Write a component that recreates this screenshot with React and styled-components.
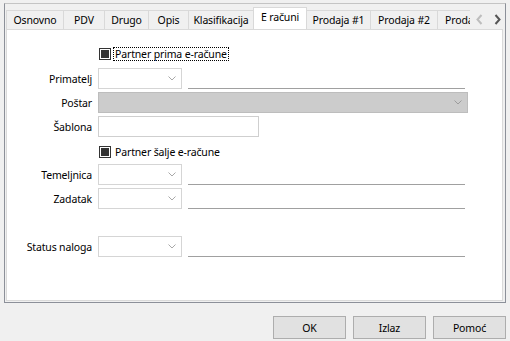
import React from "react";
import styled, { createGlobalStyle } from "styled-components";

const GlobalStyle = createGlobalStyle`
  body {
    margin: 0;
    background: #f0f0f0;
    font-family: "Noto Sans", "Liberation Sans", sans-serif;
    font-size: 10.5px;
    letter-spacing: -0.15px;
    color: #000;
  }
`;

const Window = styled.div`
  width: 510px;
  height: 341px;
  box-sizing: border-box;
  padding: 3px 4px 0 4px;
  background: #f0f0f0;
  display: flex;
  flex-direction: column;
`;

const Frame = styled.div`
  height: 300px;
  box-sizing: border-box;
  border: 1px solid #8c9099;
  border-top-color: #c4c4c4;
  padding: 0 2px 1px 1px;
  display: flex;
  flex-direction: column;
`;

const TabBar = styled.div`
  height: 25px;
  display: flex;
  align-items: flex-end;
`;

const TabStrip = styled.div`
  width: 464px;
  height: 100%;
  overflow: hidden;
  display: flex;
  align-items: flex-end;
`;

const Tab = styled.div`
  flex: none;
  box-sizing: border-box;
  width: ${(p) => p.width}px;
  height: ${(p) => (p.active ? 23 : 19)}px;
  margin-right: -1px;
  margin-bottom: ${(p) => (p.active ? -1 : 0)}px;
  position: relative;
  z-index: ${(p) => (p.active ? 2 : 1)};
  border: 1px solid #d9d9d9;
  border-bottom: none;
  background: ${(p) => (p.active ? "#fff" : "#f0f0f0")};
  display: flex;
  align-items: ${(p) => (p.active ? "flex-start" : "center")};
  padding-top: ${(p) => (p.active ? 2 : 0)}px;
  justify-content: center;
  white-space: nowrap;
  overflow: hidden;
`;

const Scroller = styled.div`
  flex: 1;
  height: 19px;
  display: flex;
  align-items: center;
  justify-content: space-between;
  padding: 0 2px 0 6px;
`;

const Page = styled.div`
  flex: 1;
  background: #fff;
  border: 1px solid #dadada;
  display: flex;
  flex-direction: column;
`;

const Row = styled.div`
  display: grid;
  grid-template-columns: 85px auto 1fr;
  column-gap: 6px;
  margin-top: ${(p) => p.top}px;
  height: ${(p) => p.h || 21}px;
`;

const Label = styled.div`
  text-align: right;
  align-self: center;
`;

const Combo = styled.div`
  width: ${(p) => p.width || 84}px;
  box-sizing: border-box;
  height: 21px;
  border: 1px solid ${(p) => (p.disabled ? "#bdbdbd" : "#d5d5d5")};
  background: ${(p) => (p.disabled ? "#cccccc" : "#fff")};
  display: flex;
  align-items: center;
  justify-content: flex-end;
  padding-right: 5px;
`;

const TextBox = styled.div`
  width: 161px;
  box-sizing: border-box;
  height: 21px;
  border: 1px solid #cfcfcf;
  background: #fff;
`;

const Underline = styled.div`
  width: 277px;
  align-self: end;
  border-bottom: 1px solid #a0a0a0;
`;

const Check = styled.div`
  grid-column: 2 / 4;
  display: flex;
  align-items: center;
  padding-left: 1px;
`;

const Box = styled.span`
  width: 12px;
  height: 12px;
  box-sizing: border-box;
  border: 1px solid #333;
  padding: 1px;
  margin-right: 2px;
  display: flex;
  &::after {
    content: "";
    flex: 1;
    background: #333;
  }
`;

const CheckText = styled.span`
  padding: 0 1px;
  line-height: 12px;
  border: 1px dotted ${(p) => (p.focused ? "#000" : "transparent")};
`;

const Footer = styled.div`
  display: flex;
  justify-content: flex-end;
  gap: 7px;
  margin-top: 13px;
`;

const Button = styled.div`
  width: 73px;
  height: 23px;
  box-sizing: border-box;
  border: 1px solid #adadad;
  background: #e1e1e1;
  display: flex;
  align-items: center;
  justify-content: center;
`;

const Chevron = ({ color = "#a8a8a8", w = 8 }) => (
  <svg width={w} height="5" viewBox="0 0 8 5">
    <path d="M0.5 0.5 L4 4 L7.5 0.5" fill="none" stroke={color} strokeWidth="1" />
  </svg>
);

const Arrow = ({ dir, color }) => (
  <svg width="7" height="11" viewBox="0 0 7 11">
    <path
      d={dir === "left" ? "M5.5 1 L1.5 5.5 L5.5 10" : "M1.5 1 L5.5 5.5 L1.5 10"}
      fill="none"
      stroke={color}
      strokeWidth="2"
    />
  </svg>
);

const tabs = [
  { name: "Osnovno", width: 58 },
  { name: "PDV", width: 42 },
  { name: "Drugo", width: 45 },
  { name: "Opis", width: 41 },
  { name: "Klasifikacija", width: 66 },
  { name: "E računi", width: 54, active: true },
  { name: "Prodaja #1", width: 65 },
  { name: "Prodaja #2", width: 68 },
  { name: "Prodaja #3", width: 68 },
];

const ComboRow = ({ label, top }) => (
  <Row top={top}>
    <Label>{label}</Label>
    <Combo>
      <Chevron />
    </Combo>
    <Underline />
  </Row>
);

export default function App() {
  return (
    <>
      <GlobalStyle />
      <Window>
        <Frame>
          <TabBar>
            <TabStrip>
              {tabs.map((t) => (
                <Tab key={t.name} width={t.width} active={t.active}>
                  {t.name}
                </Tab>
              ))}
            </TabStrip>
            <Scroller>
              <Arrow dir="left" color="#bdbdbd" />
              <Arrow dir="right" color="#555" />
            </Scroller>
          </TabBar>
          <Page>
            <Row top={17} h={14}>
              <Check>
                <Box />
                <CheckText focused>Partner prima e-račune</CheckText>
              </Check>
            </Row>
            <ComboRow label="Primatelj" top={7} />
            <Row top={3}>
              <Label>Poštar</Label>
              <Combo disabled width={370}>
                <Chevron color="#9c9c9c" />
              </Combo>
            </Row>
            <Row top={3}>
              <Label>Šablona</Label>
              <TextBox />
            </Row>
            <Row top={8} h={14}>
              <Check>
                <Box />
                <CheckText>Partner šalje e-račune</CheckText>
              </Check>
            </Row>
            <ComboRow label="Temeljnica" top={5} />
            <ComboRow label="Zadatak" top={3} />
            <ComboRow label="Status naloga" top={27} />
          </Page>
        </Frame>
        <Footer>
          <Button>OK</Button>
          <Button>Izlaz</Button>
          <Button>Pomoć</Button>
        </Footer>
      </Window>
    </>
  );
}
